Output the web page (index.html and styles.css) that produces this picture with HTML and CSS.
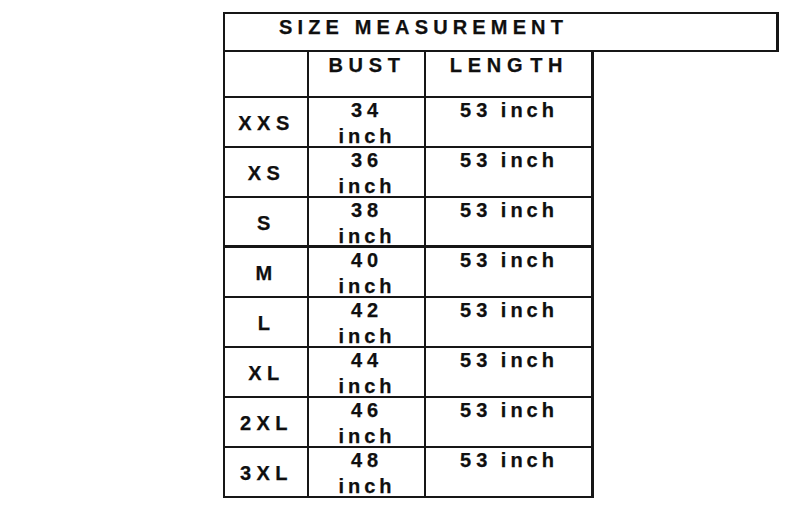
FILE: index.html
```html
<!DOCTYPE html>
<html lang="en">
<head>
<meta charset="utf-8">
<title>Size Measurement</title>
<link rel="stylesheet" href="styles.css">
</head>
<body>
<div class="sheet">
  <div class="title"><span class="txt head-title">SIZE MEASUREMENT</span></div>
  <div class="table">
    <div class="row head">
      <div class="cell"></div>
      <div class="cell mid"><span class="txt caps">BUST</span></div>
      <div class="cell mid"><span class="txt caps">LENG<span class="gap">TH</span></span></div>
    </div>
    <div class="row">
      <div class="cell size"><span class="txt lbl">XXS</span></div>
      <div class="cell mid"><span class="txt two"><span class="num">34</span><br><span class="low">inch</span></span></div>
      <div class="cell mid"><span class="txt two"><span class="num">53</span> <span class="low wide">inch</span></span></div>
    </div>
    <div class="row">
      <div class="cell size"><span class="txt lbl">XS</span></div>
      <div class="cell mid"><span class="txt two"><span class="num">36</span><br><span class="low">inch</span></span></div>
      <div class="cell mid"><span class="txt two"><span class="num">53</span> <span class="low wide">inch</span></span></div>
    </div>
    <div class="row thick">
      <div class="cell size"><span class="txt lbl">S</span></div>
      <div class="cell mid"><span class="txt two"><span class="num">38</span><br><span class="low">inch</span></span></div>
      <div class="cell mid"><span class="txt two"><span class="num">53</span> <span class="low wide">inch</span></span></div>
    </div>
    <div class="row">
      <div class="cell size"><span class="txt lbl">M</span></div>
      <div class="cell mid"><span class="txt two"><span class="num">40</span><br><span class="low">inch</span></span></div>
      <div class="cell mid"><span class="txt two"><span class="num">53</span> <span class="low wide">inch</span></span></div>
    </div>
    <div class="row">
      <div class="cell size"><span class="txt lbl">L</span></div>
      <div class="cell mid"><span class="txt two"><span class="num">42</span><br><span class="low">inch</span></span></div>
      <div class="cell mid"><span class="txt two"><span class="num">53</span> <span class="low wide">inch</span></span></div>
    </div>
    <div class="row">
      <div class="cell size"><span class="txt lbl">XL</span></div>
      <div class="cell mid"><span class="txt two"><span class="num">44</span><br><span class="low">inch</span></span></div>
      <div class="cell mid"><span class="txt two"><span class="num">53</span> <span class="low wide">inch</span></span></div>
    </div>
    <div class="row">
      <div class="cell size"><span class="txt lbl">2XL</span></div>
      <div class="cell mid"><span class="txt two"><span class="num">46</span><br><span class="low">inch</span></span></div>
      <div class="cell mid"><span class="txt two"><span class="num">53</span> <span class="low wide">inch</span></span></div>
    </div>
    <div class="row">
      <div class="cell size"><span class="txt lbl">3XL</span></div>
      <div class="cell mid"><span class="txt two"><span class="num">48</span><br><span class="low">inch</span></span></div>
      <div class="cell mid"><span class="txt two"><span class="num">53</span> <span class="low wide">inch</span></span></div>
    </div>
  </div>
</div>
</body>
</html>
```

FILE: styles.css
```css
* {
  box-sizing: border-box;
  margin: 0;
  padding: 0;
}

body {
  background: #ffffff;
  font-family: "Liberation Sans", Arial, sans-serif;
  font-weight: 700;
  color: #0f0f0f;
}

.sheet {
  padding: 12px 0 0 223px;
}

.title {
  width: 556px;
  height: 40px;
  border: 2px solid #161616;
  border-right-width: 3px;
  padding-left: 54px;
}

.txt {
  display: inline-block;
  font-size: 20px;
  line-height: 26px;
  white-space: nowrap;
  -webkit-text-stroke: 0.25px #0f0f0f;
}

.head-title {
  letter-spacing: 5.15px;
}

.caps {
  letter-spacing: 5.7px;
}

.num {
  letter-spacing: 5px;
}

.low {
  letter-spacing: 4px;
}

.wide {
  margin-left: 3px;
}

.lbl {
  letter-spacing: 5.5px;
}

.gap {
  margin-left: 2px;
}

.table {
  width: 371px;
  border-left: 2px solid #161616;
  border-right: 3px solid #161616;
}

.row {
  display: grid;
  grid-template-columns: 84px 117px 1fr;
  height: 50px;
  border-bottom: 2px solid #161616;
}

.row.head {
  height: 46px;
}

.row.thick {
  border-bottom-width: 3px;
}

.cell {
  border-right: 2px solid #161616;
  text-align: center;
  padding-left: 1px;
}

.cell:last-child {
  border-right: 0;
}

.size {
  display: flex;
  align-items: center;
  justify-content: center;
  padding-bottom: 2px;
}

.two {
  margin-top: -1px;
}
```
